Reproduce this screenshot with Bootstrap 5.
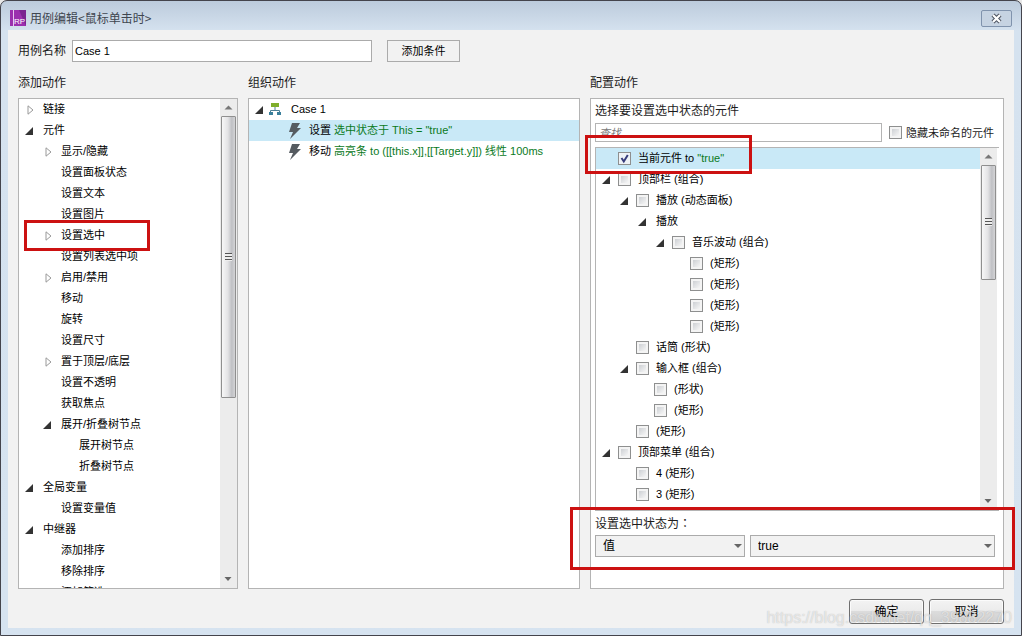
<!DOCTYPE html>
<html lang="zh-CN">
<head>
<meta charset="utf-8">
<meta name="viewport" content="width=device-width, initial-scale=1">
<title>用例编辑</title>
<link href="https://cdn.jsdelivr.net/npm/bootstrap@5.3.0/dist/css/bootstrap.min.css" rel="stylesheet">
<style>
  :root { --line: #b4b4b4; --pick: #c9e9f7; --mark: #cc1111; }
  body { font: 12px/16px "Liberation Sans", "Noto Sans CJK SC", sans-serif; color: #1c1c1c; background: #e8e8e8; }
  .dialog-frame { height: 100vh; min-height: 480px; background: linear-gradient(#bccbdc 0, #d5e2ef 30px, #d6e3f0 100%); border: 1px solid #44444c; border-radius: 7px 7px 0 0; padding: 0 7px 7px; }
  .title-bar { height: 29px; padding: 5px 2px 0 2px; color: #3f4650; flex: none; }
  .title-text { font-family: "Noto Sans CJK SC", sans-serif; }
  .close-btn { width: 31px; height: 17px; border: 1px solid #8093ad; border-radius: 2px; background: #c6d3e2; }
  .dialog-main { background: #f2f2f2; padding: 10px 10px 4px 10px; min-height: 0; }
  .name-row { height: 22px; flex: none; }
  .name-row label { width: 54px; }
  .name-input { width: 300px; height: 22px; border: 1px solid #ababab; padding: 0 2px; font-size: 11px; background: #fff; color: #000; }
  .cond-btn { width: 73px; height: 22px; margin-left: 15px; border: 1px solid #ababab; background: #f2f2f2; font-size: 11px; line-height: 16px; }
  .work-area { display: grid; grid-template-columns: 220fr 332fr 414fr; gap: 10px; margin-top: 13px; min-height: 0; }
  .work-area > section { min-width: 0; min-height: 0; }
  h2 { font-size: 12px; line-height: 16px; font-weight: 400; margin: 0 0 7px; }
  .pane { border: 1px solid var(--line); background: #fff; min-height: 0; }
  .tree { overflow: hidden; font-size: 11px; min-width: 0; color: #000; }
  .tree li { height: 21px; line-height: 21px; display: flex; align-items: center; white-space: nowrap; position: relative; flex-shrink: 0; }
  .tree .picked { background: var(--pick); }
  .arr { width: 9px; height: 10px; flex: none; }
  .acts li { padding-left: 6px; gap: 9px; }
  .acts .d1 { padding-left: 24px; }
  .acts .d2 { padding-left: 42px; }
  .acts .d3 { padding-left: 60px; }
  .cases li { padding-left: 6px; }
  .cases .act { padding-left: 39px; gap: 7px; }
  .case-name { margin-left: 9px; }
  .val { color: #0a7a1c; }
  .widgets li { padding-left: 6px; gap: 7px; }
  .widgets .d1 { padding-left: 24px; }
  .widgets .d2 { padding-left: 42px; }
  .widgets .d3 { padding-left: 60px; }
  .widgets .d4 { padding-left: 78px; }
  .widgets .plain { gap: 9px; }
  .tick { appearance: none; width: 13px; height: 13px; margin: 0; flex: none; border: 1px solid #8e8f8f; background: linear-gradient(135deg, #cdd0d4, #f6f6f6) content-box, #f4f4f4; padding: 2px; }
  .tick:checked { background: url("data:image/svg+xml,%3Csvg xmlns='http://www.w3.org/2000/svg' viewBox='0 0 11 11'%3E%3Cpath d='M2.5 5l2.3 3.5L8.8 2' fill='none' stroke='%23373c7c' stroke-width='2'/%3E%3C/svg%3E") border-box center / 11px no-repeat, #eef2f6; }
  .track { width: 17px; flex: none; background: #ececec; padding: 0 1px; }
  .track svg { width: 15px; height: 17px; flex: none; display: block; }
  .widget-box .track { margin-right: 2px; }
  .thumb { border: 1px solid #8f8f8f; border-radius: 1px; background: linear-gradient(90deg, #f7f7f7, #e3e3e5 45%, #bfc0c4 75%, #d4d4d6); }
  .thumb i { width: 7px; height: 8px; background: repeating-linear-gradient(#555 0 1px, #eee 1px 3px); }
  .config { padding: 4px 4px 0; }
  .find { height: 19px; border: 1px solid var(--line); padding: 0 3px; font-size: 11px; font-style: italic; min-width: 0; }
  .find::placeholder { color: #777; }
  .hide-opt { font-size: 11px; gap: 4px; margin: 0 5px 0 7px; }
  .widget-box { margin-top: 5px; border: 1px solid var(--line); border-right: 0; min-height: 0; }
  .value-part { height: 77px; padding-top: 4px; flex: none; }
  .full-colon { font-family: "Noto Sans CJK TC", sans-serif; }
  .value-selects { display: grid; grid-template-columns: 150fr 245fr; gap: 5px; margin: 3px 4px 0 0; }
  .value-part select { height: 22px; border: 1px solid #ababab; border-radius: 0; padding: 0 16px 0 7px; font-size: 12px; line-height: 18px; color: #000; background: #f2f2f2 url("data:image/svg+xml,%3Csvg xmlns='http://www.w3.org/2000/svg' viewBox='0 0 8 4'%3E%3Cpath d='M0 0h8L4 4z' fill='%23666'/%3E%3C/svg%3E") no-repeat right 2px center / 8px 4px; }
  .frame-mark { position: absolute; border: 3px solid var(--mark); pointer-events: none; z-index: 3; }
  .mark-act { left: 5px; top: -5px; width: 126px; height: 31px; }
  .mark-widget { left: -11px; top: -13px; width: 167px; height: 39px; }
  .mark-value { left: -25px; right: -16px; top: -4px; height: 63px; }
  .foot { gap: 5px; margin-top: 10px; flex: none; }
  .foot button { width: 75px; height: 25px; border: 1px solid #6f6f6f; border-radius: 3px; box-shadow: inset 0 0 0 1px #fbfbfb; background: linear-gradient(#f3f3f3 0, #ebebeb 50%, #dcdcdc 50%, #cfcfcf); color: #000; padding: 0; }
  .site-mark { position: absolute; right: 2px; bottom: 1px; font-size: 16px; line-height: 18px; color: rgba(255,255,255,.6); text-shadow: 0 0 1px rgba(120,120,120,.5); pointer-events: none; white-space: nowrap; }
</style>
</head>
<body>
<svg class="d-none" xmlns="http://www.w3.org/2000/svg">
  <symbol id="shut" viewBox="0 0 9 10"><path d="M3 .8v8.400l5-4.200z" fill="#fff" stroke="#999"/></symbol>
  <symbol id="open" viewBox="0 0 9 10"><path d="M8 1v8H0z" fill="#333"/></symbol>
  <symbol id="bolt" viewBox="0 0 14 16"><path d="M4 0h8L9 5h4L2 16l3-7H1z" fill="#555b60"/></symbol>
  <symbol id="up" viewBox="0 0 15 17"><path d="M3.500 10.500l4-4 4 4z" fill="#777"/></symbol>
  <symbol id="down" viewBox="0 0 15 17"><path d="M3.500 6h7l-3.500 4z" fill="#666"/></symbol>
</svg>
<div class="dialog-frame d-flex flex-column">
  <header class="title-bar d-flex align-items-start justify-content-between">
    <div class="d-flex align-items-center">
      <svg width="16" height="16" viewBox="0 0 16 16" class="me-1 mt-1"><path fill="#9b2fae" d="M0 0h16v16H0z"/><path fill="#7a2390" d="M9 0h7v16z"/><path stroke="#e9c6f0" d="M3.500 0v16"/><text x="4" y="14" font-size="8" fill="#fff" font-family="Liberation Sans">RP</text></svg>
      <span class="title-text mt-1">用例编辑&lt;鼠标单击时&gt;</span>
    </div>
    <button type="button" class="close-btn p-0 d-flex align-items-center justify-content-center mt-1" aria-label="关闭">
      <svg width="13" height="11" viewBox="0 0 13 11"><path d="M3 2l7 7M10 2l-7 7" stroke="#4b5260" stroke-width="4.200"/><path d="M3 2l7 7M10 2l-7 7" stroke="#fff" stroke-width="2.200"/></svg>
    </button>
  </header>
  <main class="dialog-main d-flex flex-column flex-fill position-relative">
    <div class="name-row d-flex align-items-center">
      <label for="caseName">用例名称</label>
      <input id="caseName" class="name-input" type="text" value="Case 1">
      <button type="button" class="cond-btn p-0">添加条件</button>
    </div>
    <div class="work-area flex-fill">
      <section class="d-flex flex-column">
        <h2>添加动作</h2>
        <div class="pane d-flex flex-fill">
          <ul class="tree acts list-unstyled mb-0 flex-fill">
            <li><svg class="arr"><use href="#shut"/></svg>链接</li>
            <li><svg class="arr"><use href="#open"/></svg>元件</li>
            <li class="d1"><svg class="arr"><use href="#shut"/></svg>显示/隐藏</li>
            <li class="d2">设置面板状态</li>
            <li class="d2">设置文本</li>
            <li class="d2">设置图片</li>
            <li class="d1"><svg class="arr"><use href="#shut"/></svg>设置选中<span class="frame-mark mark-act"></span></li>
            <li class="d2">设置列表选中项</li>
            <li class="d1"><svg class="arr"><use href="#shut"/></svg>启用/禁用</li>
            <li class="d2">移动</li>
            <li class="d2">旋转</li>
            <li class="d2">设置尺寸</li>
            <li class="d1"><svg class="arr"><use href="#shut"/></svg>置于顶层/底层</li>
            <li class="d2">设置不透明</li>
            <li class="d2">获取焦点</li>
            <li class="d1"><svg class="arr"><use href="#open"/></svg>展开/折叠树节点</li>
            <li class="d3">展开树节点</li>
            <li class="d3">折叠树节点</li>
            <li><svg class="arr"><use href="#open"/></svg>全局变量</li>
            <li class="d2">设置变量值</li>
            <li><svg class="arr"><use href="#open"/></svg>中继器</li>
            <li class="d2">添加排序</li>
            <li class="d2">移除排序</li>
            <li class="d2">添加筛选</li>
          </ul>
          <div class="track d-flex flex-column">
            <svg><use href="#up"/></svg>
            <div class="flex-fill"><div class="thumb d-flex align-items-center justify-content-center" style="height:62%"><i></i></div></div>
            <svg><use href="#down"/></svg>
          </div>
        </div>
      </section>
      <section class="d-flex flex-column">
        <h2>组织动作</h2>
        <div class="pane flex-fill">
          <ul class="tree cases list-unstyled mb-0">
            <li><svg class="arr"><use href="#open"/></svg><svg class="ms-1" width="14" height="13" viewBox="0 0 14 13"><path fill="#7fae2c" d="M3 0h8v4H3z"/><path d="M7 4v3M2.500 10V7.500h9V10" fill="none" stroke="#4c7f95"/><path fill="#3a7f9b" d="M1 9h4v3H1zM9 9h4v3H9z"/></svg><span class="case-name">Case 1</span></li>
            <li class="act picked"><svg width="14" height="16"><use href="#bolt"/></svg><span>设置 <span class="val">选中状态于 This = "true"</span></span></li>
            <li class="act"><svg width="14" height="16"><use href="#bolt"/></svg><span>移动 <span class="val">高亮条 to ([[this.x]],[[Target.y]]) 线性 100ms</span></span></li>
          </ul>
        </div>
      </section>
      <section class="d-flex flex-column">
        <h2>配置动作</h2>
        <div class="pane config d-flex flex-column flex-fill">
          <div class="mb-1">选择要设置选中状态的元件</div>
          <div class="d-flex align-items-center">
            <input class="find flex-fill" type="text" placeholder="查找" aria-label="查找">
            <div class="hide-opt d-flex align-items-center"><input class="tick" type="checkbox" id="hideUnnamed"><label for="hideUnnamed">隐藏未命名的元件</label></div>
          </div>
          <div class="widget-box position-relative d-flex flex-fill">
            <ul class="tree widgets list-unstyled mb-0 flex-fill">
              <li class="picked"><span class="arr"></span><input class="tick" type="checkbox" id="w0" checked><label for="w0">当前元件 to <span class="val">"true"</span></label></li>
              <li><svg class="arr"><use href="#open"/></svg><input class="tick" type="checkbox" id="w1"><label for="w1">顶部栏 (组合)</label></li>
              <li class="d1"><svg class="arr"><use href="#open"/></svg><input class="tick" type="checkbox" id="w2"><label for="w2">播放 (动态面板)</label></li>
              <li class="d2 plain"><svg class="arr"><use href="#open"/></svg>播放</li>
              <li class="d3"><svg class="arr"><use href="#open"/></svg><input class="tick" type="checkbox" id="w3"><label for="w3">音乐波动 (组合)</label></li>
              <li class="d4"><span class="arr"></span><input class="tick" type="checkbox" id="w4"><label for="w4">(矩形)</label></li>
              <li class="d4"><span class="arr"></span><input class="tick" type="checkbox" id="w5"><label for="w5">(矩形)</label></li>
              <li class="d4"><span class="arr"></span><input class="tick" type="checkbox" id="w6"><label for="w6">(矩形)</label></li>
              <li class="d4"><span class="arr"></span><input class="tick" type="checkbox" id="w7"><label for="w7">(矩形)</label></li>
              <li class="d1"><span class="arr"></span><input class="tick" type="checkbox" id="w8"><label for="w8">话筒 (形状)</label></li>
              <li class="d1"><svg class="arr"><use href="#open"/></svg><input class="tick" type="checkbox" id="w9"><label for="w9">输入框 (组合)</label></li>
              <li class="d2"><span class="arr"></span><input class="tick" type="checkbox" id="w10"><label for="w10">(形状)</label></li>
              <li class="d2"><span class="arr"></span><input class="tick" type="checkbox" id="w11"><label for="w11">(矩形)</label></li>
              <li class="d1"><span class="arr"></span><input class="tick" type="checkbox" id="w12"><label for="w12">(矩形)</label></li>
              <li><svg class="arr"><use href="#open"/></svg><input class="tick" type="checkbox" id="w13"><label for="w13">顶部菜单 (组合)</label></li>
              <li class="d1"><span class="arr"></span><input class="tick" type="checkbox" id="w14"><label for="w14">4 (矩形)</label></li>
              <li class="d1"><span class="arr"></span><input class="tick" type="checkbox" id="w15"><label for="w15">3 (矩形)</label></li>
              <li class="d1"><span class="arr"></span><input class="tick" type="checkbox" id="w16" aria-label="矩形"></li>
            </ul>
            <div class="track d-flex flex-column">
              <svg><use href="#up"/></svg>
              <div class="flex-fill"><div class="thumb d-flex align-items-center justify-content-center" style="height:35%"><i></i></div></div>
              <svg><use href="#down"/></svg>
            </div>
            <span class="frame-mark mark-widget"></span>
          </div>
          <div class="value-part position-relative">
            <label for="kind" class="d-block">设置选中状态为<span class="full-colon" lang="zh-TW">：</span></label>
            <div class="value-selects">
              <select id="kind" class="form-select"><option>值</option></select>
              <select class="form-select" aria-label="状态"><option>true</option></select>
            </div>
            <span class="frame-mark mark-value"></span>
          </div>
        </div>
      </section>
    </div>
    <div class="foot d-flex justify-content-end">
      <button type="button">确定</button>
      <button type="button">取消</button>
    </div>
    <div class="site-mark">https://blog.csdn.net/qq_39882270</div>
  </main>
</div>
<script src="https://cdn.jsdelivr.net/npm/bootstrap@5.3.0/dist/js/bootstrap.bundle.min.js"></script>
</body>
</html>
